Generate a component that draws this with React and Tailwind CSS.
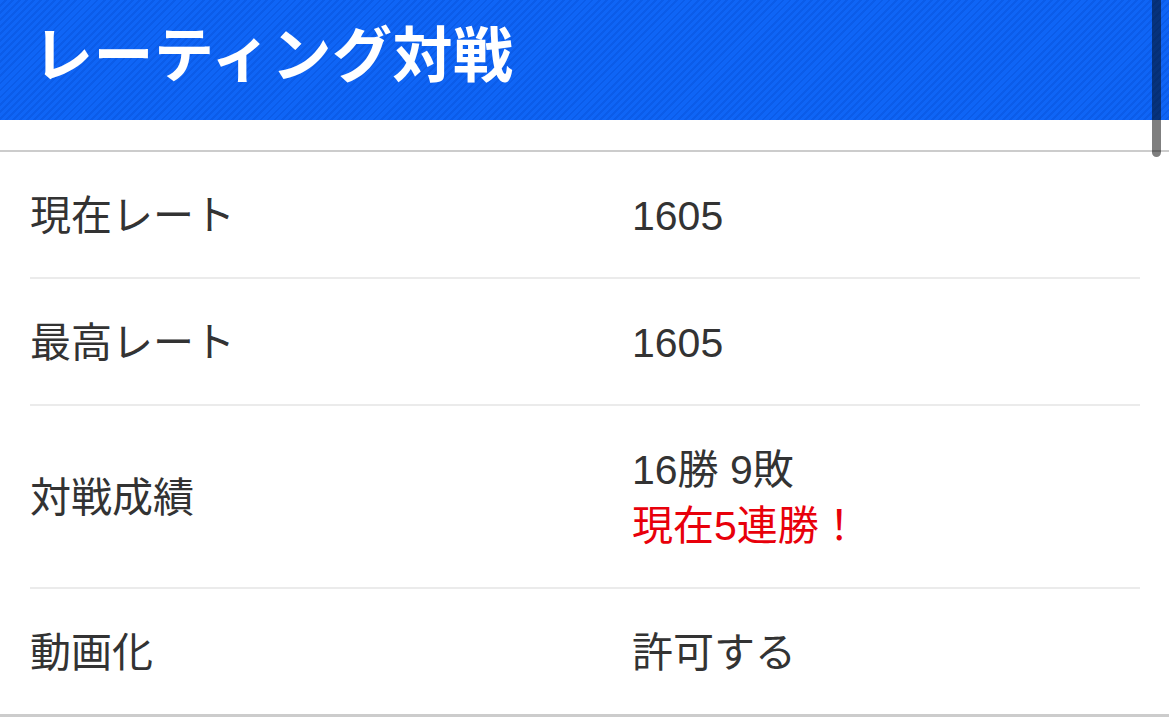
import React from "react";

const rows = [
  { label: "現在レート", values: ["1605"] },
  { label: "最高レート", values: ["1605"] },
  { label: "対戦成績", values: ["16勝 9敗"], note: "現在5連勝！" },
  { label: "動画化", values: ["許可する"] },
];

export default function App() {
  return (
    <div
      className="relative w-[1169px] h-[728px] overflow-hidden bg-white"
      style={{ fontFamily: '"Liberation Sans", "Noto Sans CJK JP", sans-serif' }}
    >
      {/* Header */}
      <div className="h-[120px] flex items-center pl-[33px] pb-[6px] bg-[repeating-linear-gradient(135deg,#0f65f6_0px,#0f65f6_3px,#0b5ce9_3px,#0b5ce9_5px)]">
        <h1 className="text-[60px] font-bold text-white tracking-[0.5px]">レーティング対戦</h1>
      </div>

      {/* Table */}
      <div className="mt-[30px] border-t-2 border-b-[3px] border-[#cccccc] pl-[30px] pr-[29px]">
        {rows.map((row, i) => (
          <div
            key={row.label}
            className={`flex items-center pt-[36px] pb-[33px] ${
              i < rows.length - 1 ? "border-b-2 border-[#ebebeb]" : ""
            }`}
          >
            <div className="w-[602px] text-[41px] leading-[56px] text-[#333333]">
              {row.label}
            </div>
            <div className="flex flex-col text-[41px] leading-[56px] text-[#333333]">
              {row.values.map((v) => (
                <span key={v}>{v}</span>
              ))}
              {row.note && <span className="text-[#e8000b]">{row.note}</span>}
            </div>
          </div>
        ))}
      </div>

      {/* Scrollbar thumb */}
      <div className="absolute top-0 left-[1152px] w-[9px] h-[157px] rounded-b-full bg-black/50" />
    </div>
  );
}
